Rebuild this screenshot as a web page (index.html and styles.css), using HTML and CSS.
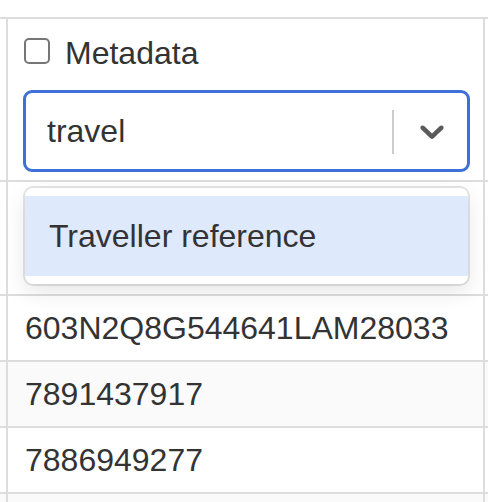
FILE: index.html
```html
<!DOCTYPE html>
<html lang="en">
<head>
<meta charset="utf-8">
<title>Metadata filter</title>
<link rel="stylesheet" href="styles.css">
</head>
<body>
<div class="grid">
  <div class="row header-row">
    <div class="cell header-cell">
      <label class="check-label">
        <span class="checkbox"></span>
        <span class="check-text">Metadata</span>
      </label>
      <div class="select">
        <div class="control">
          <div class="value">travel</div>
          <span class="separator"></span>
          <span class="indicator">
            <svg width="40" height="40" viewBox="0 0 20 20" aria-hidden="true"><path d="M4.516 7.548c0.436-0.446 1.043-0.481 1.576 0l3.908 3.747 3.908-3.747c0.533-0.481 1.141-0.446 1.574 0 0.436 0.445 0.408 1.197 0 1.615-0.406 0.418-4.695 4.502-4.695 4.502-0.217 0.223-0.502 0.335-0.787 0.335s-0.57-0.112-0.789-0.335c0 0-4.287-4.084-4.695-4.502s-0.436-1.17 0-1.615z"/></svg>
          </span>
        </div>
        <div class="menu">
          <div class="option focused">Traveller reference</div>
        </div>
      </div>
    </div>
  </div>
  <div class="row tall-row"><div class="cell"></div></div>
  <div class="row"><div class="cell">603N2Q8G544641LAM28033</div></div>
  <div class="row striped"><div class="cell">7891437917</div></div>
  <div class="row"><div class="cell">7886949277</div></div>
  <div class="row striped last-row"><div class="cell"></div></div>
</div>
</body>
</html>
```
FILE: styles.css
```css
html, body {
  margin: 0;
  padding: 0;
  background: #ffffff;
}

body {
  font-family: "Liberation Sans", Arial, sans-serif;
  font-size: 32px;
  color: #333333;
  overflow: hidden;
}

.grid {
  margin-top: 17px;
  border-top: 2px solid #dddddd;
}

.row {
  display: flex;
  border-bottom: 2px solid #dddddd;
  background: #ffffff;
}

.row.striped {
  background: #fafafa;
}

.row.last-row {
  border-bottom: 0;
}

.cell {
  margin-left: 6px;
  width: 475px;
  flex: 0 0 475px;
  border-left: 2px solid #dddddd;
  border-right: 2px solid #dddddd;
  height: 64px;
  padding: 0 16px;
  box-sizing: content-box;
  display: flex;
  align-items: center;
  white-space: nowrap;
  line-height: 1;
}

.cell:not(.header-cell) {
  width: 443px;
  flex-basis: 443px;
  padding-left: 17px;
  padding-right: 15px;
}

.tall-row .cell {
  height: 112px;
}

.last-row .cell {
  height: 8px;
}

.header-cell {
  height: auto;
  width: 447px;
  flex-basis: 447px;
  padding: 12px 13px 8px 15px;
  display: flex;
  flex-direction: column;
  align-items: stretch;
}

.check-label {
  display: flex;
  align-items: center;
  height: 40px;
  gap: 15px;
  padding-left: 1px;
}

.checkbox {
  width: 22px;
  height: 22px;
  border: 2px solid #767676;
  border-radius: 5px;
  background: #ffffff;
  flex: 0 0 auto;
}

.check-text {
  margin-top: 4px;
  line-height: 1;
}

.select {
  position: relative;
  margin-top: 19px;
}

.control {
  display: flex;
  align-items: stretch;
  height: 76px;
  border: 3px solid #3d71d7;
  border-radius: 9px;
  background: #ffffff;
}

.value {
  flex: 1 1 auto;
  display: flex;
  align-items: center;
  padding-left: 21px;
  line-height: 1;
}

.separator {
  width: 2px;
  margin: 17px 0 15px;
  background: #cccccc;
  flex: 0 0 auto;
}

.indicator {
  display: flex;
  align-items: center;
  padding: 0 15px 0 18px;
}

.indicator svg {
  display: block;
  fill: #5a5a5a;
}

.menu {
  position: absolute;
  top: calc(100% + 16px);
  left: 2px;
  right: 2px;
  background: #ffffff;
  border-radius: 8px;
  padding: 8px 0;
  box-shadow: 0 0 0 2px rgba(0, 0, 0, 0.1), 0 8px 22px rgba(0, 0, 0, 0.1);
  z-index: 2;
}

.option {
  height: 80px;
  display: flex;
  align-items: center;
  padding: 0 24px;
  line-height: 1;
}

.option.focused {
  background: #deeafc;
}
```
